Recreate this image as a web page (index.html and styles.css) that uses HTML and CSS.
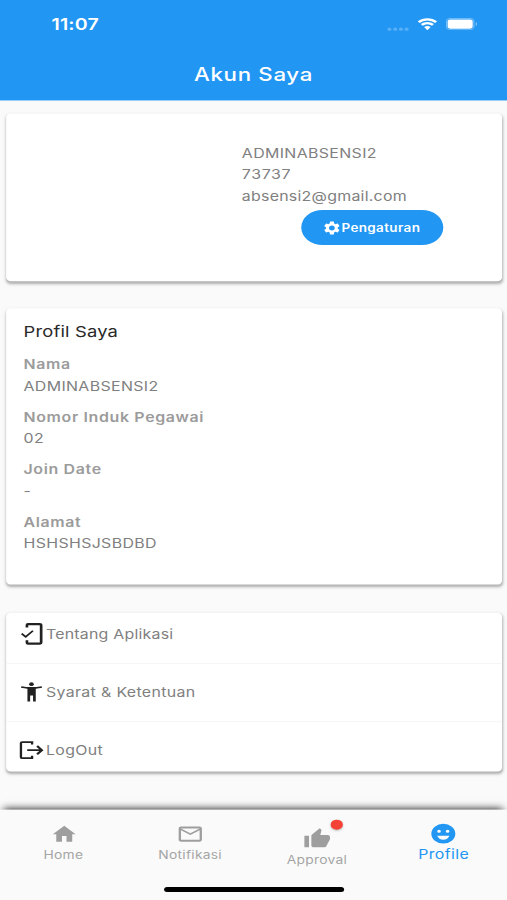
FILE: index.html
```html
<!DOCTYPE html>
<html lang="id">
<head>
<meta charset="utf-8">
<title>Akun Saya</title>
<link rel="stylesheet" href="styles.css">
</head>
<body>
<div class="screen">
  <header class="header">
    <div class="status">
      <span class="time">11:07</span>
      <div class="indicators">
        <svg class="dots" width="18" height="4" viewBox="0 0 18 4"><circle cx="2" cy="2" r="1.6"/><circle cx="6.7" cy="2" r="1.6"/><circle cx="11.4" cy="2" r="1.6"/><circle cx="16" cy="2" r="1.6"/></svg>
        <svg class="wifi" width="16" height="12" viewBox="0 0 16 12"><path d="M.9 4.1a10.300 10.300 0 0 1 14.200 0M3.400 6.800a6.700 6.700 0 0 1 9.200 0" fill="none" stroke="#fff" stroke-width="2.300"/><path d="M5.300 9a4 4 0 0 1 5.400 0L8 12z" fill="#fff"/></svg>
        <svg class="battery" width="26" height="12" viewBox="0 0 26 12"><rect x=".5" y=".5" width="22.500" height="11" rx="3" fill="none" stroke="#fff" stroke-opacity=".35"/><rect x="1.500" y="1.500" width="20.500" height="9" rx="2" fill="#fff"/><path d="M24.500 4v4c1.400-.5 1.400-3.500 0-4z" fill="#fff" fill-opacity=".4"/></svg>
      </div>
    </div>
    <h1 class="title">Akun Saya</h1>
  </header>

  <main class="content">
    <section class="card account">
      <div class="account-info">
        <p class="value">ADMINABSENSI2</p>
        <p class="value digits">73737</p>
        <p class="value email">absensi2@gmail.com</p>
        <button class="settings">
          <svg width="16" height="16" viewBox="0 0 24 24"><path d="M19.14 12.94c.04-.3.06-.61.06-.94 0-.32-.02-.64-.07-.94l2.03-1.58c.18-.14.23-.41.12-.61l-1.92-3.32c-.12-.22-.37-.29-.59-.22l-2.39.96c-.5-.38-1.03-.7-1.62-.94l-.36-2.54c-.04-.24-.24-.41-.48-.41h-3.84c-.24 0-.43.17-.47.41l-.36 2.54c-.59.24-1.13.57-1.62.94l-2.39-.96c-.22-.08-.47 0-.59.22L2.74 8.87c-.12.21-.08.47.12.61l2.03 1.58c-.05.3-.09.63-.09.94s.02.64.07.94l-2.03 1.58c-.18.14-.23.41-.12.61l1.92 3.32c.12.22.37.29.59.22l2.39-.96c.5.38 1.03.7 1.62.94l.36 2.54c.05.24.24.41.48.41h3.84c.24 0 .44-.17.47-.41l.36-2.54c.59-.24 1.13-.56 1.62-.94l2.39.96c.22.08.47 0 .59-.22l1.92-3.32c.12-.22.07-.47-.12-.61l-2.01-1.58zM12 15.6c-1.98 0-3.6-1.62-3.6-3.6s1.62-3.6 3.6-3.6 3.6 1.62 3.6 3.6-1.62 3.6-3.6 3.6z"/></svg>
          <span>Pengaturan</span>
        </button>
      </div>
    </section>

    <section class="card profile">
      <h2 class="profile-title">Profil Saya</h2>
      <dl class="fields">
        <div class="field"><dt>Nama</dt><dd>ADMINABSENSI2</dd></div>
        <div class="field"><dt>Nomor Induk Pegawai</dt><dd>02</dd></div>
        <div class="field"><dt>Join Date</dt><dd>-</dd></div>
        <div class="field"><dt>Alamat</dt><dd>HSHSHSJSBDBD</dd></div>
      </dl>
    </section>

    <section class="card menu">
      <a class="row first">
        <svg width="24" height="24" viewBox="0 0 24 24"><path d="M7 5.600V3.200q0-.9.9-.9h9.400q1.300 0 1.300 1.300v16.800q0 1.300-1.300 1.300H7.900q-.9 0-.9-.9v-2.400" fill="none" stroke="#212121" stroke-width="2.200"/><path d="M2.700 11.800l3.300 3.200 5.900-6" fill="none" stroke="#212121" stroke-width="1.600"/></svg>
        <span class="about">Tentang Aplikasi</span>
      </a>
      <a class="row">
        <svg width="24" height="24" viewBox="0 0 24 24"><g fill="#212121" transform="translate(-.6 -.6)"><circle cx="11.300" cy="4.700" r="1.900"/><path d="M20 8.400q-2.800.75-5.200.95V22H12.600v-6h-2.400v6H8V9.350Q5.500 9.150 2.700 8.400l.4-1.700q8.200 1.700 16.500 0z"/></g></svg>
        <span>Syarat &amp; Ketentuan</span>
      </a>
      <a class="row">
        <svg width="24" height="24" viewBox="0 0 24 24"><path d="M11.200 6.200V3.800H3.100Q2.100 3.800 2.100 4.800v14q0 1 1 1h8.100v-2.400M7.200 11.800H18.800M15.300 7.700l3.900 4.100-3.900 4.100" fill="none" stroke="#212121" stroke-width="1.900"/></svg>
        <span>LogOut</span>
      </a>
    </section>
  </main>

  <nav class="nav">
    <a class="tab">
      <svg width="24" height="24" viewBox="0 0 24 24"><path transform="translate(1.300 1.300) scale(.93)" d="M10 20v-6h4v6h5v-8h3L12 3 2 12h3v8z"/></svg>
      <span>Home</span>
    </a>
    <a class="tab">
      <svg width="24" height="24" viewBox="0 0 24 24"><path transform="translate(1 1) scale(.95)" d="M22 6c0-1.100-.9-2-2-2H4c-1.100 0-2 .9-2 2v12c0 1.100.9 2 2 2h16c1.100 0 2-.9 2-2V6zm-2 0-8 5-8-5h16zm0 12H4V8l8 5 8-5v10z"/></svg>
      <span>Notifikasi</span>
    </a>
    <a class="tab approval">
      <div class="thumb">
        <svg width="24" height="24" viewBox="0 0 24 24"><path transform="translate(.6 .6) scale(.95)" d="M1 21h4V9H1v12zm22-11c0-1.100-.9-2-2-2h-6.310l.95-4.570.03-.32c0-.41-.17-.79-.44-1.060L14.170 1 7.590 7.590C7.220 7.950 7 8.450 7 9v10c0 1.100.9 2 2 2h9c.83 0 1.540-.5 1.840-1.220l3.020-7.050c.09-.23.14-.47.14-.73v-2z"/></svg>
        <i class="badge"></i>
      </div>
      <span>Approval</span>
    </a>
    <a class="tab active">
      <svg width="24" height="24" viewBox="0 0 24 24"><path fill-rule="evenodd" d="M12 2.200a9.800 9.800 0 1 0 0 19.600 9.800 9.800 0 0 0 0-19.600zM8.500 8a1.500 1.500 0 1 1 0 3 1.500 1.500 0 0 1 0-3zm7 0a1.500 1.500 0 1 1 0 3 1.500 1.500 0 0 1 0-3zM12 18c-2.280 0-4.220-1.660-5-4h10c-.78 2.340-2.720 4-5 4z"/></svg>
      <span>Profile</span>
    </a>
    <div class="home-indicator"></div>
  </nav>
</div>
</body>
</html>
```
FILE: styles.css
```css
* { box-sizing: border-box; margin: 0; padding: 0; }
html, body { width: 507px; height: 900px; overflow: hidden; background: #fafafa; }

/* 414x896 logical screen, fitted to the window */
.screen {
  display: flex;
  flex-direction: column;
  width: 414px;
  height: 896px;
  overflow: hidden;
  background: #fafafa;
  color: #808080;
  font-family: Inter, "Liberation Sans", sans-serif;
  font-size: 13px;
  letter-spacing: .28px;
  transform: scale(1.22464, 1.00446);
  transform-origin: 0 0;
}
svg { display: block; flex: none; }

.header { height: 100.300px; flex: none; background: #2196f3; color: #fff; }
.status { display: flex; justify-content: space-between; height: 44px; padding: 4px 24px 0 42px; align-items: center; }
.time { font-size: 16px; font-weight: 600; line-height: 20px; letter-spacing: .15px; }
.indicators { display: flex; align-items: center; }
.dots { fill: #fff; opacity: .25; margin: 9px 7px 0 0; }
.wifi { margin-right: 7px; }
.title { height: 56px; line-height: 60px; text-align: center; font-size: 18.200px; font-weight: 500; letter-spacing: .55px; }

.content { display: flex; flex-direction: column; height: 706px; padding: 13.200px 4px 0 5px; gap: 27.500px; }
.card { background: #fff; border-radius: 4px; box-shadow: 0 2px 2px rgba(0,0,0,.2), 0 2px 4px rgba(0,0,0,.13); flex: none; }

.account { height: 166.500px; padding: 28.500px 0 0 192.500px; }
.value { line-height: 21.300px; }
.digits { letter-spacing: .5px; }
.email { letter-spacing: .2px; }
.settings {
  display: flex; align-items: center; justify-content: center; gap: 0;
  width: 116px; height: 35px; margin: 3px 0 0 48.500px;
  padding: 1px 2px 0 0;
  border: 0; border-radius: 18px; background: #2196f3; color: #fff; fill: #fff;
  font: 600 11px Inter, sans-serif; letter-spacing: .3px;
}

.profile { height: 275px; padding: 13px 14.200px; }
.profile-title { font-size: 15px; font-weight: 400; line-height: 21px; color: #292929; letter-spacing: .15px; }
.fields { display: grid; gap: 10px; margin-top: 11px; }
.field { line-height: 21.200px; }
dt { font-weight: 600; color: #9b9b9b; letter-spacing: .53px; }

.menu { height: 157.500px; margin-top: .5px; }
.row { display: flex; align-items: center; height: 58px; padding-left: 9.500px; border-top: 1px solid #f6f6f6; }
.row span { margin-left: -1px; }
.row .about { letter-spacing: .18px; }
.row.first { height: 49.500px; padding-bottom: 8px; border: 0; }

.nav { display: grid; grid-template-columns: repeat(4, 1fr); grid-template-rows: 66px 24px; margin-top: .5px; height: 90px; flex: none; background: #fafafa; box-shadow: 0 -4px 7px -3px rgba(0,0,0,.9); }
.tab { display: flex; flex-direction: column; align-items: center; padding-top: 12px; color: #a5a5a5; fill: #9e9e9e; font-size: 11.300px; letter-spacing: .2px; line-height: 16px; }
.tab span { margin-top: 1px; }
.approval { padding-top: 17px; }
.thumb { position: relative; }
.badge { position: absolute; left: 23.500px; top: -7.500px; width: 10px; height: 10px; border-radius: 50%; background: #f44336; box-shadow: 0 1px 2px rgba(0,0,0,.25); }
.active { color: #2196f3; fill: #2196f3; font-size: 13px; letter-spacing: .3px; }
.active span { margin-top: 0; }
.home-indicator { grid-column: 1 / -1; width: 147px; height: 5px; margin: 11px auto 0; border-radius: 3px; background: #000; }
```
